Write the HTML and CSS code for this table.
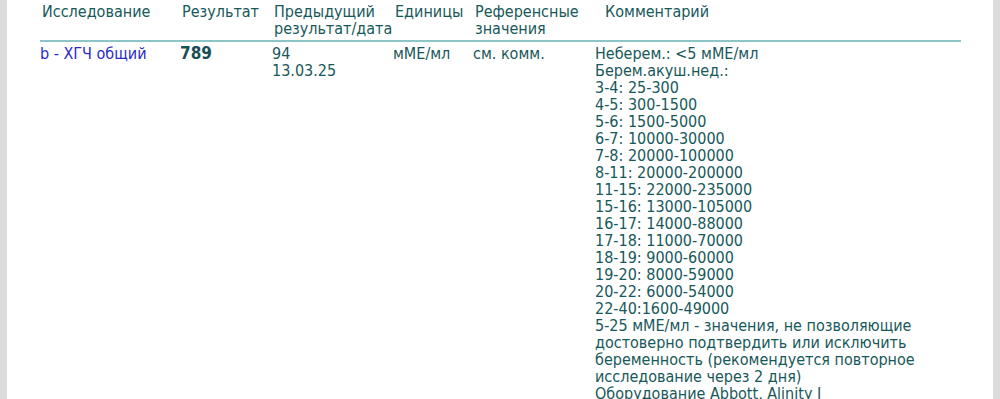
FILE: index.html
```html
<!DOCTYPE html>
<html lang="ru">
<head>
<meta charset="utf-8">
<link rel="stylesheet" href="styles.css">
</head>
<body>
<div class="frame">
  <div class="side side-left"></div>
  <div class="page">
    <div class="report">
      <div class="row head">
        <div class="cell c1">Исследование</div>
        <div class="cell c2">Результат</div>
        <div class="cell c3">Предыдущий<br>результат/дата</div>
        <div class="cell c4">Единицы</div>
        <div class="cell c5">Референсные<br>значения</div>
        <div class="cell c6 hc">Комментарий</div>
      </div>
      <div class="row body">
        <div class="cell c1 test">b - ХГЧ общий</div>
        <div class="cell c2 result">789</div>
        <div class="cell c3">94<br>13.03.25</div>
        <div class="cell c4">мМЕ/мл</div>
        <div class="cell c5">см. комм.</div>
        <div class="cell c6">Неберем.: &lt;5 мМЕ/мл<br>Берем.акуш.нед.:<br>3-4: 25-300<br>4-5: 300-1500<br>5-6: 1500-5000<br>6-7: 10000-30000<br>7-8: 20000-100000<br>8-11: 20000-200000<br>11-15: 22000-235000<br>15-16: 13000-105000<br>16-17: 14000-88000<br>17-18: 11000-70000<br>18-19: 9000-60000<br>19-20: 8000-59000<br>20-22: 6000-54000<br>22-40:1600-49000<br>5-25 мМЕ/мл - значения, не позволяющие<br>достоверно подтвердить или исключить<br>беременность (рекомендуется повторное<br>исследование через 2 дня)<br>Оборудование Abbott, Alinity I</div>
      </div>
    </div>
  </div>
  <div class="side side-right"></div>
</div>
</body>
</html>
```
FILE: styles.css
```css
html, body {
  margin: 0;
  padding: 0;
  background: #ffffff;
}
.frame {
  display: flex;
  width: 1000px;
  height: 399px;
  overflow: hidden;
}
.side {
  width: 7px;
  flex: none;
  background: #dcdcdc;
}
.page {
  flex: 1;
  padding: 0 32px 0 33px;
  font-family: "DejaVu Sans Condensed", "DejaVu Sans", sans-serif;
  font-size: 16px;
  line-height: 17px;
  color: #17585a;
}
.row {
  display: grid;
  grid-template-columns: 140px 92px 121px 80px 122px 1fr;
}
.head {
  padding-top: 3px;
  padding-bottom: 3px;
  border-bottom: 2px solid #8cc4c8;
}
.head .cell {
  padding-left: 2px;
}
.head .hc {
  padding-left: 10px;
}
.body {
  padding-top: 3px;
}
.test {
  color: #2a2ac6;
}
.result {
  font-weight: bold;
  font-size: 17px;
  color: #174f55;
}
```
